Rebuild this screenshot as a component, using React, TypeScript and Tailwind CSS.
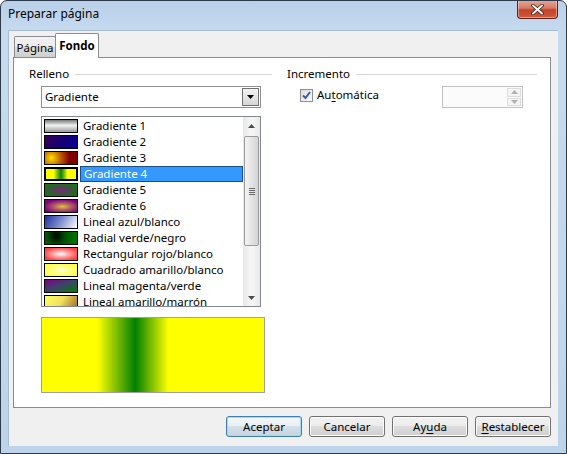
import React from "react";

const items: { label: string; bg: string }[] = [
  { label: "Gradiente 1", bg: "linear-gradient(to bottom, #7a7a7a 0%, #f2f2f2 45%, #9a9a9a 100%)" },
  { label: "Gradiente 2", bg: "linear-gradient(135deg, #3a0050 0%, #1a0070 45%, #0000a0 100%)" },
  { label: "Gradiente 3", bg: "radial-gradient(circle at 20% 50%, #ffe000 0%, #c06000 35%, #800000 70%)" },
  { label: "Gradiente 4", bg: "linear-gradient(to right, #ffff00 25%, #008000 50%, #ffff00 72%)" },
  { label: "Gradiente 5", bg: "radial-gradient(ellipse at 50% 50%, #7a2a7a 0%, #4a4a4a 40%, #107a10 85%)" },
  { label: "Gradiente 6", bg: "radial-gradient(ellipse at 55% 55%, #e0c040 0%, #b06060 35%, #800080 75%)" },
  { label: "Lineal azul/blanco", bg: "linear-gradient(120deg, #2030a0 0%, #8090d0 50%, #ffffff 100%)" },
  { label: "Radial verde/negro", bg: "radial-gradient(circle at 35% 30%, #000000 0%, #005000 40%, #007000 80%)" },
  { label: "Rectangular rojo/blanco", bg: "radial-gradient(ellipse at 50% 50%, #ffffff 0%, #ffb0b0 30%, #ff4040 80%)" },
  { label: "Cuadrado amarillo/blanco", bg: "radial-gradient(ellipse at 50% 50%, #ffffe0 0%, #ffff80 40%, #ffff40 90%)" },
  { label: "Lineal magenta/verde", bg: "linear-gradient(160deg, #800080 0%, #404070 45%, #008000 100%)" },
  { label: "Lineal amarillo/marrón", bg: "linear-gradient(120deg, #ffff60 0%, #f0e060 50%, #a07020 100%)" },
];

function Triangle({ dir, color = "#000" }: { dir: "up" | "down"; color?: string }) {
  return (
    <svg width="7" height="4" viewBox="0 0 7 4">
      {dir === "down" ? <path d="M0 0 H7 L3.5 4 Z" fill={color} /> : <path d="M0 4 H7 L3.5 0 Z" fill={color} />}
    </svg>
  );
}

function Button({ children, def }: { children: React.ReactNode; def?: boolean }) {
  return (
    <div
      className={
        "w-[76px] h-[21px] rounded-[3px] border flex items-center justify-center text-black " +
        (def
          ? "border-[#3c7fb1] bg-[linear-gradient(to_bottom,#f4f8fb_0%,#e8eef3_49%,#d4dfe8_50%,#c6d3de_100%)] shadow-[inset_0_0_0_1px_#a7d9f5]"
          : "border-[#707070] bg-[linear-gradient(to_bottom,#f2f2f2_0%,#ebebeb_49%,#dddddd_50%,#cfcfcf_100%)] shadow-[inset_0_0_0_1px_#fcfcfc]")
      }
    >
      {children}
    </div>
  );
}

export default function App() {
  return (
    <div className="w-[567px] h-[454px] font-['Noto_Sans',sans-serif] text-[11.5px] leading-[16px] text-black">
      <div className="w-full h-full border border-[#2c3a4a] rounded-t-[7px] overflow-hidden flex flex-col bg-[linear-gradient(to_bottom,#b9d0e8_0%,#c6daef_30px,#c2d8ee_60%,#bcd3ea_100%)]">
        {/* title bar */}
        <div className="h-[29px] flex items-start justify-between pl-[7px] shrink-0">
          <div className="mt-[5px] text-[12px] leading-[16px]">Preparar página</div>
          <div className="-mt-px mr-[8px] w-[41px] h-[19px] rounded-b-[4px] border border-[#5b2115] border-t-0 bg-[linear-gradient(to_bottom,#e9a99a_0%,#d67a64_45%,#c2432b_55%,#d25a3e_100%)] shadow-[inset_0_0_0_1px_rgba(255,220,210,0.5)] flex items-center justify-center">
            <svg width="13" height="11" viewBox="0 0 13 11">
              <path d="M2 1.5 L11 9.5 M11 1.5 L2 9.5" stroke="#4a1a10" strokeWidth="3.6" strokeLinecap="round" />
              <path d="M2 1.5 L11 9.5 M11 1.5 L2 9.5" stroke="#ffffff" strokeWidth="2" strokeLinecap="round" />
            </svg>
          </div>
        </div>
        {/* client */}
        <div className="flex-1 pl-[7px] pr-[8px] pb-[7px]">
          <div className="w-[550px] h-[416px] bg-[#f0f0f0] border-t border-l border-[#a8bccf] flex flex-col pl-[4px] pr-[8px] pt-[2px]">
            {/* tabs */}
            <div className="h-[24px] flex items-end pl-[1px] relative z-10">
              <div className="w-[42px] h-[21px] border border-b-0 border-[#898c95] rounded-t-[2px] bg-[linear-gradient(to_bottom,#f2f2f2_0%,#ebebeb_50%,#dddddd_51%,#cfcfcf_100%)] flex items-center justify-center pt-[1px]">
                Página
              </div>
              <div className="-ml-px w-[44px] h-[25px] -mb-px border border-b-0 border-[#898c95] rounded-t-[2px] bg-white flex items-center justify-center font-bold pb-[1px]">
                Fondo
              </div>
            </div>
            {/* panel */}
            <div className="w-[538px] h-[351px] border border-[#898c95] bg-white flex pl-[15px] pr-[12px] pt-[8px]">
              {/* left column */}
              <div className="w-[243px] flex flex-col">
                <div className="h-[16px] flex items-center">
                  <span>Relleno</span>
                  <div className="flex-1 h-px bg-[#d5d5d5] ml-[6px]" />
                </div>
                {/* dropdown */}
                <div className="mt-[4px] ml-[12px] w-[220px] h-[22px] border border-[#8e8f8f] bg-white flex items-center justify-between">
                  <span className="pl-[3px]">Gradiente</span>
                  <div className="mr-px w-[17px] h-[18px] border border-[#707070] bg-[linear-gradient(to_bottom,#f2f2f2_0%,#e6e6e6_50%,#d6d6d6_100%)] flex items-center justify-center">
                    <Triangle dir="down" />
                  </div>
                </div>
                {/* listbox */}
                <div className="mt-[8px] ml-[12px] w-[220px] h-[191px] border border-[#828790] bg-white flex overflow-hidden">
                  <div className="w-[201px] pt-px overflow-hidden">
                    {items.map((it, i) => {
                      const sel = i === 3;
                      return (
                        <div key={it.label} className="h-[16px] flex items-center">
                          <div
                            className={"ml-[2px] w-[34px] h-[14px] shrink-0 " + (sel ? "border-2 border-black" : "border border-black")}
                            style={{ background: it.bg }}
                          />
                          <div
                            className={
                              "ml-[2px] flex-1 h-[16px] pl-[3px] whitespace-nowrap flex items-center " +
                              (sel ? "bg-[#3399ff] text-white border border-[#1c4f86] pl-[2px]" : "")
                            }
                          >
                            {it.label}
                          </div>
                        </div>
                      );
                    })}
                  </div>
                  {/* scrollbar */}
                  <div className="w-[17px] h-full bg-[linear-gradient(to_right,#e6e6e6,#f5f5f5_40%,#f5f5f5_60%,#e9e9e9)] flex flex-col">
                    <div className="h-[17px] flex items-center justify-center">
                      <Triangle dir="up" color="#4d4d4d" />
                    </div>
                    <div className="mt-[2px] mx-[1px] h-[110px] rounded-[2px] border border-[#9a9a9a] bg-[linear-gradient(to_right,#f4f4f4,#e4e4e4_50%,#d4d4d4)] flex items-center justify-center">
                      <div className="flex flex-col gap-[1px]">
                        <div className="w-[6px] h-px bg-[#6a6a6a]" />
                        <div className="w-[6px] h-px bg-[#6a6a6a]" />
                        <div className="w-[6px] h-px bg-[#6a6a6a]" />
                        <div className="w-[6px] h-px bg-[#6a6a6a]" />
                      </div>
                    </div>
                    <div className="flex-1" />
                    <div className="h-[17px] flex items-center justify-center">
                      <Triangle dir="down" color="#4d4d4d" />
                    </div>
                  </div>
                </div>
                {/* preview */}
                <div className="mt-[10px] ml-[12px] w-[224px] h-[76px] border border-[#a0a0a0] bg-[linear-gradient(to_right,#ffff00_25%,#008000_42%,#ffff00_57%)]" />
              </div>
              {/* right column */}
              <div className="ml-[15px] w-[250px] flex flex-col">
                <div className="h-[16px] flex items-center">
                  <span>Incremento</span>
                  <div className="flex-1 h-px bg-[#d5d5d5] ml-[6px]" />
                </div>
                <div className="mt-[4px] flex justify-between pr-[14px]">
                  <div className="ml-[13px] h-[22px] flex items-start pt-[3px]">
                    <div className="w-[13px] h-[13px] border border-[#8f8f8f] bg-[linear-gradient(135deg,#dcdcdc,#fbfbfb)] flex items-center justify-center">
                      <svg width="9" height="9" viewBox="0 0 9 9">
                        <path d="M1 4.5 L3.5 7 L8 1" stroke="#3d5a9e" strokeWidth="2" fill="none" />
                      </svg>
                    </div>
                    <span className="ml-[4px] -mt-[2px]">
                      Au<span className="underline underline-offset-2">t</span>omática
                    </span>
                  </div>
                  <div className="w-[81px] h-[22px] border border-[#c0c0c0] bg-[#fbfbfb] flex justify-end items-stretch p-[1px]">
                    <div className="w-[14px] flex flex-col gap-px">
                      <div className="flex-1 border border-[#dcdcdc] bg-[#f4f4f4] flex items-center justify-center">
                        <Triangle dir="up" color="#b0b0b0" />
                      </div>
                      <div className="flex-1 border border-[#dcdcdc] bg-[#f4f4f4] flex items-center justify-center">
                        <Triangle dir="down" color="#b0b0b0" />
                      </div>
                    </div>
                  </div>
                </div>
              </div>
            </div>
            {/* buttons */}
            <div className="mt-[8px] flex justify-end gap-[7px] -mr-px">
              <Button def>Aceptar</Button>
              <Button>Cancelar</Button>
              <Button>
                Ay<span className="underline underline-offset-2">u</span>da
              </Button>
              <Button>
                <span className="underline underline-offset-2">R</span>establecer
              </Button>
            </div>
          </div>
        </div>
      </div>
    </div>
  );
}
